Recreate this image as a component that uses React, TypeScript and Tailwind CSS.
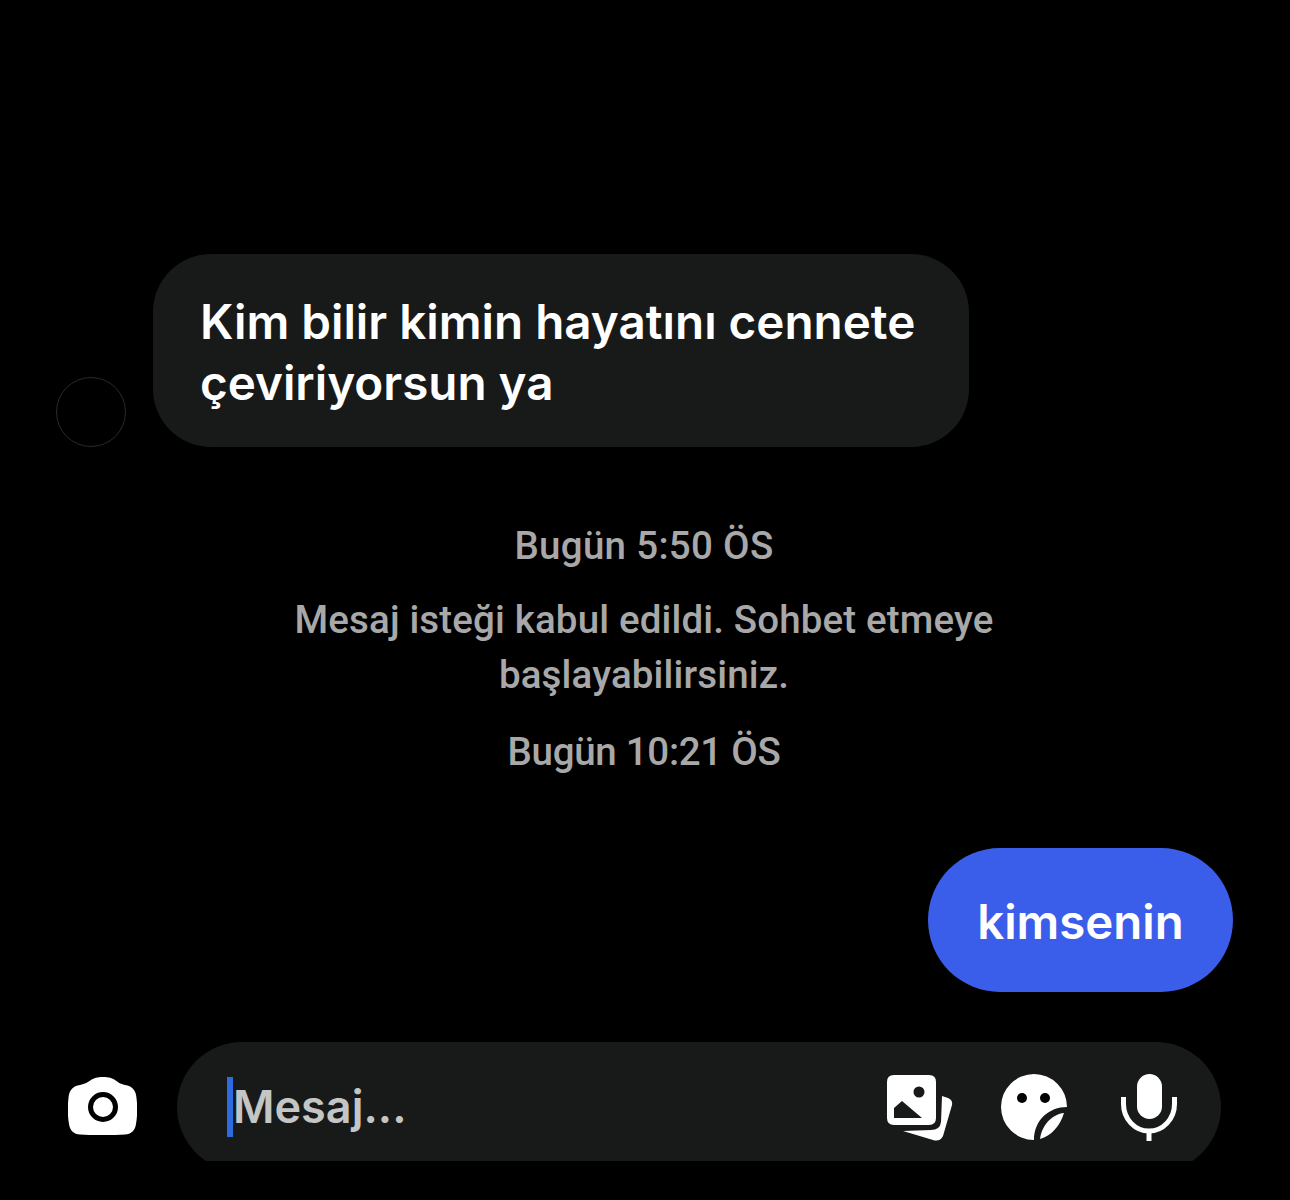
function CameraIcon() {
  return (
    <svg width="69" height="58" viewBox="0 0 69 58" className="shrink-0 mt-[35px]">
      <path fill="#fff" fillRule="evenodd" d="M23 3 C26 1 29 0 35 0 C41 0 44 1 47 3 C50 5 52 7 57 8 C64 9 68 13 68.500 21 C69.500 29 69.500 39 68 47 C67 54 63 57 57 57.500 C42 58.500 27 58.500 12 57.500 C6 57 2 54 1 47 C-0.500 39 -0.500 29 0.500 21 C1 13 5 9 12 8 C17 7 20 5 23 3 Z M35 15 A15 15 0 1 0 35 45 A15 15 0 1 0 35 15 Z M35 20 A10 10 0 1 1 35 40 A10 10 0 1 1 35 20 Z" />
    </svg>
  );
}

function GalleryIcon() {
  return (
    <svg width="66" height="66" viewBox="0 0 66 66" className="shrink-0 mt-[1px]">
      <path fill="#fff" fillRule="evenodd" d="M7 0 H42 Q49 0 49 7 V43 Q49 50 42 50 H7 Q0 50 0 43 V7 Q0 0 7 0 Z M32 11.500 A5.500 5.500 0 1 0 32 22.500 A5.500 5.500 0 1 0 32 11.500 Z M7 43 H35 L15 26 L7 33 Z" />
      <path fill="#fff" d="M55 21 L54 47 Q53 55 44 55 L16 56 L46 65 Q53 67 56 61 L65 30 Q66 25 61 23 Z" />
    </svg>
  );
}

function StickerIcon() {
  return (
    <svg width="66" height="67" viewBox="0 0 66 67" className="shrink-0">
      <path fill="#fff" d="M33 66 A33 33 0 1 1 66 33 C48 33 33 46 33 66 Z" />
      <circle cx="21" cy="24" r="5" fill="#000" />
      <circle cx="44" cy="24" r="5" fill="#000" />
      <path fill="#fff" d="M63 39 C52 40 41 50 39 65 C50 62 59 52 63 39 Z" />
    </svg>
  );
}

function MicIcon() {
  return (
    <svg width="58" height="67" viewBox="0 0 58 67" className="shrink-0 ml-[5px]" fill="none">
      <rect x="17" y="0" width="25" height="45" rx="12.500" fill="#fff" />
      <path stroke="#fff" strokeWidth="5" d="M3.500 23 V30 A25.500 27 0 0 0 54.500 30 V23" />
      <path stroke="#fff" strokeWidth="5" d="M29 56 V67" />
    </svg>
  );
}

export default function App() {
  return (
    <div className="h-[1200px] bg-black pt-[254px] overflow-hidden font-['Inter',sans-serif]">
      <div className="flex items-end gap-[27px] pl-[56px]">
        <div className="w-[70px] h-[70px] rounded-full border border-[#2a2a2a]" />
        <div className="w-[816px] h-[193px] rounded-[58px] bg-[#171a19] pl-[47px] pt-[37px] text-white text-[47.6px] leading-[61px] font-semibold">
          Kim bilir kimin hayatını cennete
          <br />
          çeviriyorsun ya
        </div>
      </div>

      <div className="mt-[71px] flex flex-col items-center pr-[2px] text-[#a8a8a8] text-[38.5px] leading-[55px] font-['Roboto',sans-serif] font-medium">
        <p className="tracking-[0.3px]">Bugün 5:50 ÖS</p>
        <p className="mt-[19px] text-center tracking-[0.15px]">
          Mesaj isteği kabul edildi. Sohbet etmeye
          <br />
          başlayabilirsiniz.
        </p>
        <p className="mt-[22px] tracking-[-0.3px]">Bugün 10:21 ÖS</p>
      </div>

      <div className="mt-[69px] flex justify-end pr-[57px]">
        <div className="w-[305px] h-[144px] rounded-[72px] bg-[#3b5eea] flex items-center justify-center pt-[3px] text-white text-[47.4px] font-semibold">
          kimsenin
        </div>
      </div>

      <div className="mt-[50px] h-[119px] overflow-hidden flex items-start gap-[40px] pl-[68px]">
        <CameraIcon />
        <div className="w-[1044px] h-[130px] shrink-0 rounded-[65px] bg-[#171a19] flex items-center pl-[50px] pr-[43px]">
          <span className="w-[6px] h-[60px] bg-[#2f6be0]" />
          <span className="text-[#c4c6c5] text-[45px] font-semibold">Mesaj...</span>
          <div className="ml-auto flex items-center gap-[48px]">
            <GalleryIcon />
            <StickerIcon />
            <MicIcon />
          </div>
        </div>
      </div>
    </div>
  );
}
